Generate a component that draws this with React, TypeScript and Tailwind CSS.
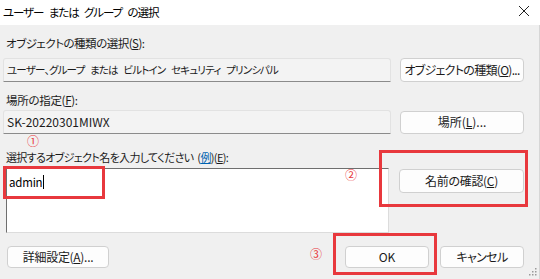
import React from "react";

const font = "font-['Noto_Sans_CJK_JP','Noto_Sans',sans-serif] [font-feature-settings:'palt']";

const Btn = ({ children, className = "" }: { children: React.ReactNode; className?: string }) => (
  <div
    className={
      "flex items-center justify-center whitespace-nowrap bg-[#fdfdfd] border border-[#d0d0d0] rounded-[4px] text-[12px] text-[#1b1b1b] " +
      className
    }
  >
    {children}
  </div>
);

const Field = ({ children, className = "" }: { children: React.ReactNode; className?: string }) => (
  <div
    className={
      "flex-1 h-[24px] flex items-center px-[3px] whitespace-pre bg-[#f3f3f3] border border-[#e2e2e2] border-b-[#8b8b8b] rounded-t-[3px] text-[#1b1b1b] " +
      className
    }
  >
    {children}
  </div>
);

export default function App() {
  return (
    <div className={"relative w-[540px] h-[279px] bg-[#f0f0f0] flex flex-col overflow-hidden " + font}>
      {/* title bar */}
      <div className="h-[25px] bg-white flex items-center justify-between pl-[3px] pr-[10px] shrink-0">
        <span className="text-[11.5px] tracking-[-1.1px] [word-spacing:4px] text-black">
          ユーザー または グループ の選択
        </span>
        <svg width="12" height="12" viewBox="0 0 12 12" className="mt-[-4px]">
          <path d="M1 1L11 11M11 1L1 11" stroke="#222" strokeWidth="1" />
        </svg>
      </div>

      <div className="flex-1 flex flex-col pl-[3px] pr-[15px] border-r border-[#d6d6d6]">
        <div className="mt-[10px] h-[16px] leading-[16px] pl-[3px] text-[11.5px] tracking-[-0.5px] text-[#1b1b1b]">
          オブジェクトの種類の選択(<u>S</u>):
        </div>
        <div className="mt-[7px] flex gap-[9px]">
          <Field className="text-[10.5px] tracking-[-0.8px] [word-spacing:4px]">
            ユーザー、グループ または ビルトイン セキュリティ プリンシパル
          </Field>
          <Btn className="w-[124px] h-[24px] text-[11.5px] tracking-[-0.7px]">
            オブジェクトの種類(<u>O</u>)...
          </Btn>
        </div>

        <div className="mt-[10px] h-[16px] leading-[16px] pl-[3px] text-[11.5px] tracking-[-0.3px] text-[#1b1b1b]">
          場所の指定(<u>F</u>):
        </div>
        <div className="mt-[2px] flex gap-[9px] items-center">
          <Field className="text-[12px]">SK-20220301MIWX</Field>
          <Btn className="w-[124px] h-[23px]">
            場所(<u>L</u>)...
          </Btn>
        </div>

        <div className="mt-[15px] h-[16px] leading-[16px] pl-[3px] text-[11px] tracking-[-0.65px] [word-spacing:2px] text-[#1b1b1b]">
          選択するオブジェクト名を入力してください (<u className="text-[#0063b1]">例</u>)(<u>E</u>):
        </div>
        <div className="mt-[3px] flex gap-[10px] items-start">
          <div className="ml-[3px] flex-1 h-[65px] bg-white border-t border-l border-[#6e6e6e] border-r border-r-[#dcdcdc] border-b border-b-[#dcdcdc] px-[2px] pt-[3px] leading-[14px]">
            <span className="text-[11.5px] tracking-[-0.2px] text-black align-middle">admin</span>
            <span className="inline-block w-[1px] h-[14px] bg-black align-middle ml-[1px]" />
          </div>
          <Btn className="mt-[1px] w-[125px] h-[24px] tracking-[-0.3px]">
            名前の確認(<u>C</u>)
          </Btn>
        </div>

        <div className="mt-[13px] flex items-center">
          <Btn className="ml-[4px] w-[102px] h-[22px] tracking-[-0.3px]">
            詳細設定(<u>A</u>)...
          </Btn>
          <div className="flex-1" />
          <Btn className="w-[84px] h-[22px]">OK</Btn>
          <Btn className="ml-[11px] w-[84px] h-[22px] text-[11.5px] tracking-[-0.6px]">キャンセル</Btn>
        </div>
      </div>

      {/* resize grip */}
      <svg className="absolute right-[3px] bottom-[3px]" width="9" height="9" viewBox="0 0 9 9">
        {[
          [7, 1],
          [7, 4],
          [4, 4],
          [7, 7],
          [4, 7],
          [1, 7],
        ].map(([x, y]) => (
          <rect key={`${x}-${y}`} x={x} y={y} width="1.5" height="1.5" fill="#9a9a9a" />
        ))}
      </svg>

      {/* annotations */}
      <div className="absolute left-[3px] top-[166px] w-[102px] h-[33px] border-[3px] border-[#e8383d]" />
      <div className="absolute left-[379px] top-[150px] w-[149px] h-[57px] border-[3px] border-[#e8383d]" />
      <div className="absolute left-[333px] top-[233px] w-[104px] h-[42px] border-[3px] border-[#e8383d]" />
      <span className="absolute left-[27px] top-[135px] text-[12px] leading-[12px] text-[#e8383d]">①</span>
      <span className="absolute left-[345px] top-[169px] text-[12px] leading-[12px] text-[#e8383d]">②</span>
      <span className="absolute left-[310px] top-[248px] text-[12px] leading-[12px] text-[#e8383d]">③</span>
    </div>
  );
}
